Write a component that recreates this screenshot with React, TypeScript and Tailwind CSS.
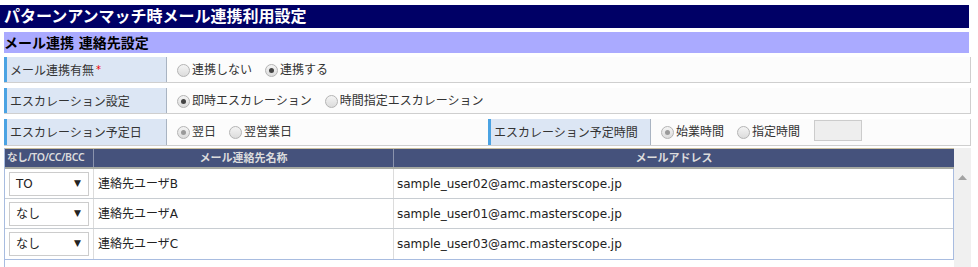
import React from "react"

const jp = "font-['DejaVu_Sans','Noto_Sans_CJK_JP',sans-serif]"

function Radio({ label, checked = false, muted = false }: { label: string; checked?: boolean; muted?: boolean }) {
  return (
    <label className="flex items-center gap-[1px] mr-[13px] text-[12px] text-[#333]">
      <span className="relative w-[13px] h-[13px] rounded-full border border-[#b4b4b4] bg-gradient-to-b from-[#f4f4f4] to-[#dcdcdc] flex items-center justify-center">
        {checked && <span className={`w-[5px] h-[5px] rounded-full ${muted ? "bg-[#9a9a9a]" : "bg-[#444]"}`} />}
      </span>
      <span className="ml-[1px]">{label}</span>
    </label>
  )
}

function Label({ text, required = false }: { text: string; required?: boolean }) {
  return (
    <div className="w-[163px] shrink-0 bg-[#dce6f4] border-l-[3px] border-[#4ba3e3] border-r border-r-[#a9b4c2] flex items-center pl-[3px] pt-[2px] text-[12px] text-[#333]">
      {text}
      {required && <span className="text-[#e00] ml-[2px] text-[10px] -mt-[3px]">*</span>}
    </div>
  )
}

function Row({ children, h }: { children: React.ReactNode; h: string }) {
  return (
    <div className={`ml-1 w-[967px] ${h} flex bg-[#fcfcfc] border-r border-b border-[#cfcfcf]`}>
      {children}
    </div>
  )
}

function Select({ value }: { value: string }) {
  return (
    <div className="w-[80px] h-[24px] border border-[#cccccc] bg-white flex items-center justify-between pl-[6px] pr-[7px] text-[12px] text-[#222]">
      <span>{value}</span>
      <span className="text-[9px]">▼</span>
    </div>
  )
}

const contacts = [
  { kind: "TO", name: "連絡先ユーザB", mail: "sample_user02@amc.masterscope.jp" },
  { kind: "なし", name: "連絡先ユーザA", mail: "sample_user01@amc.masterscope.jp" },
  { kind: "なし", name: "連絡先ユーザC", mail: "sample_user03@amc.masterscope.jp" },
]

export default function App() {
  return (
    <div className={`w-[978px] h-[267px] bg-white pt-[5px] overflow-hidden ${jp}`}>
      <div className="w-[969px] h-[23px] bg-[#000066] text-white font-bold text-[16px] leading-[23px] pl-1">
        パターンアンマッチ時メール連携利用設定
      </div>
      <div className="ml-1 mt-[4px] w-[965px] h-[21px] bg-[#aaaaff] text-black font-bold text-[14px] leading-[22px]">
        メール連携 連絡先設定
      </div>

      <div className="mt-[4px] flex flex-col gap-[5px]">
        <Row h="h-[26px]">
          <Label text="メール連携有無" required />
          <div className="flex items-start pt-[4px] pl-[10px]">
            <Radio label="連携しない" />
            <Radio label="連携する" checked />
          </div>
        </Row>
        <Row h="h-[26px]">
          <Label text="エスカレーション設定" />
          <div className="flex items-start pt-[4px] pl-[10px]">
            <Radio label="即時エスカレーション" checked />
            <Radio label="時間指定エスカレーション" />
          </div>
        </Row>
        <Row h="h-[27px]">
          <Label text="エスカレーション予定日" />
          <div className="w-[321px] flex items-start pt-[4px] pl-[10px]">
            <Radio label="翌日" checked muted />
            <Radio label="翌営業日" />
          </div>
          <Label text="エスカレーション予定時間" />
          <div className="flex items-start pt-[4px] pl-[10px]">
            <Radio label="始業時間" checked muted />
            <Radio label="指定時間" />
            <div className="w-[48px] h-[21px] -mt-[3px] ml-[1px] bg-[#eeeeee] border border-[#cccccc]" />
          </div>
        </Row>
      </div>

      <div className="mt-[2px] ml-1 flex">
        <div className="w-[950px] border-l border-[#a8bce0]">
          <div className="flex h-[21px] bg-[#45527c] border-t border-t-[#c9bf9f] border-b-2 border-b-[#a7aaa2] text-[11px] text-[#dcdcdc] font-semibold font-['Noto_Sans','Noto_Sans_CJK_JP',sans-serif] whitespace-nowrap">
            <div className="w-[89px] flex items-center pl-[2px] text-[10.5px] tracking-[-0.3px] overflow-hidden border-r border-[#8a93ad]">なし/TO/CC/BCC</div>
            <div className="w-[300px] flex items-center justify-center border-r border-[#8a93ad]">メール連絡先名称</div>
            <div className="flex-1 flex items-center justify-center">メールアドレス</div>
          </div>
          <div className="border-r border-b border-[#a8bce0]">
            {contacts.map((c, i) => (
              <div key={i} className={`flex h-[30px] bg-white text-[12px] text-[#222] ${i < 2 ? "border-b border-[#c8cdd2]" : ""}`}>
                <div className="w-[89px] flex items-center pl-[4px] border-r border-[#dcdcdc]">
                  <Select value={c.kind} />
                </div>
                <div className="w-[300px] pl-[4px] pt-[6px] border-r border-[#dcdcdc]">{c.name}</div>
                <div className="flex-1 pl-[3px] pt-[6px]">{c.mail}</div>
              </div>
            ))}
          </div>
        </div>
        <div className="w-[17px] h-[120px] bg-[#f0f0f0] flex justify-center pt-[27px]">
          <svg width="9" height="5" viewBox="0 0 9 5">
            <path d="M0 5 L4.5 0 L9 5 Z" fill="#a3a3a3" />
          </svg>
        </div>
      </div>
    </div>
  )
}
